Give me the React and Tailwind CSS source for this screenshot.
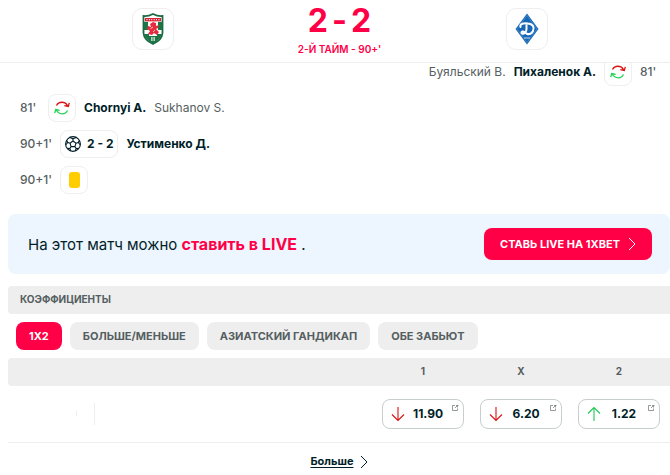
import { useState } from "react";

const tabs = ["1X2", "БОЛЬШЕ/МЕНЬШЕ", "АЗИАТСКИЙ ГАНДИКАП", "ОБЕ ЗАБЬЮТ"];

const odds = [
  { id: "1", value: "11.90", up: false },
  { id: "X", value: "6.20", up: false },
  { id: "2", value: "1.22", up: true },
];

function HomeCrest() {
  return (
    <svg viewBox="0 0 22 32" className="h-8 w-[22px]" aria-hidden="true">
      <path d="M1.5 3 Q6 3.5 11 1 Q16 3.5 20.500 3 V20 Q20 27 11 31 Q2 27 1.500 20Z" fill="#fff" stroke="#1b6a43" strokeWidth="1.8" />
      <path d="M2 9H6V17H2ZM16 9H20V17H16ZM2 21H7V28Q3 25 2 21ZM15 21H20Q19 25 15 28ZM7 23H15V28.500L11 30.500L7 28.500Z" fill="#1b7544" />
      <path d="M3 6.700H19" stroke="#d92235" strokeWidth="3.400" />
      <path d="M4.500 6.700H18" stroke="#fff" strokeWidth="1.200" strokeDasharray=".9 1.500" />
      <path d="M8 11L11 9L14 10L14 13L17 12L16 15L14 16L17 19L15 22L12 20L10 22L6 21L8 18L5 16L6 13L9 14Z" fill="#e52c3e" />
      <path d="M8.500 15.500L11 14M11 19L13 17" stroke="#fff" strokeWidth=".7" />
      <path d="M9 24H13V28H9Z" fill="#b5d3c2" />
      <path d="M10 25H12M10 27H12" stroke="#1b7544" strokeWidth=".7" />
    </svg>
  );
}

function AwayCrest() {
  return (
    <svg viewBox="0 0 24 32" className="h-8 w-6" aria-hidden="true">
      <path d="M12 .5L23.5 16L12 31.5L.5 16Z" fill="#1767b5" />
      <path d="M12 2.5L22 16L12 29.5L2 16Z" fill="none" stroke="#5b98d2" strokeWidth=".6" />
      <path d="M5.500 14C4.500 10.500 9 10 13 10.500C18.500 11 19.500 15 18 18C16.500 21 14 21.500 12 21M11.500 11.500V16C11.500 19 9 21.500 7 20.500C5.500 19 7.500 17.500 10 19.500C11 20.500 12 21 14 21" fill="none" stroke="#fff" strokeWidth="2" strokeLinecap="round" />
      <path d="M9 25H15" stroke="#a6c9e8" strokeWidth="1.2" />
    </svg>
  );
}

function SubstitutionIcon() {
  return (
    <svg viewBox="0 0 16 16" className="size-4" fill="none" strokeWidth="1.3" aria-hidden="true">
      <path d="M2.5 5.5C4.5 1.3 11 .8 13.8 6M15.3 2.8L14.3 6.5L10.3 5.6" stroke="#dc1111" />
      <path d="M13.5 10.5C11.5 14.7 5 15.2 2.2 10M.7 13.2L1.7 9.5L5.7 10.4" stroke="#20d255" />
    </svg>
  );
}

function BallIcon() {
  return (
    <svg viewBox="0 0 16 16" className="size-4" fill="none" stroke="#001e28" strokeWidth="1.1" strokeLinejoin="round" aria-hidden="true">
      <circle cx="8" cy="8" r="7.4" />
      <path d="M8 5L11 7.2L9.9 10.6H6.1L5 7.2ZM8 5V2.8M11 7.2L13.2 6.5M9.9 10.6L11.2 12.5M6.1 10.6L4.8 12.5M5 7.2L2.8 6.5" />
      <path d="M4.8 1.4L8 2.8L11.2 1.4M14.5 4.3L13.2 6.5L15.4 9M13.8 12.4L11.2 12.5L10.2 15M5.8 15L4.8 12.5L2.2 12.4M.6 9L2.8 6.5L1.5 4.3" />
    </svg>
  );
}

function Chevron() {
  return (
    <svg viewBox="0 0 8 14" className="h-3.5 w-2" fill="none" stroke="currentColor" aria-hidden="true">
      <path d="M1 1L7 7L1 13" />
    </svg>
  );
}

function TrendArrow({ up }) {
  return (
    <svg
      viewBox="0 0 14 16"
      className={up ? "h-4 w-3.5 text-[#20c955]" : "h-4 w-3.5 rotate-180 text-[#dc1111]"}
      fill="none"
      stroke="currentColor"
      aria-hidden="true"
    >
      <path d="M7 15V1.5M1 7.5L7 1.5L13 7.5" strokeWidth="1.1" />
    </svg>
  );
}

function ExternalIcon() {
  return (
    <svg viewBox="0 0 8 8" className="absolute top-1 right-1 size-2" fill="none" stroke="#7a8284" aria-hidden="true">
      <path d="M4 1.5H1.5V6.5H6.500V4.5M5 1.5H7.500M6.500 1V3.500M4 4L6.500 1.500" strokeWidth=".8" />
    </svg>
  );
}

function EventRow({ time, icon, score, player, other, away }) {
  return (
    <li className={away ? "flex flex-row-reverse items-center gap-2 pr-2.5" : "flex items-center gap-2 pl-5"}>
      <span className="min-w-5 font-medium text-[#555e61]">{time}</span>
      <span className="flex h-7 min-w-7 items-center justify-center gap-1.5 rounded-lg border border-[#eeeeee] px-1">
        {icon}
        {score && <b className="font-bold">{score}</b>}
      </span>
      {player && <b className="font-bold">{player}</b>}
      {other && <span className="text-[#555e61]">{other}</span>}
    </li>
  );
}

export default function App() {
  const [active, setActive] = useState("1X2");

  return (
    <main className="min-h-screen overflow-hidden bg-white font-['Inter','Liberation_Sans',sans-serif] text-xs text-[#001e28]">
      {/* Score */}
      <header className="relative z-10 grid h-[63px] grid-cols-3 justify-items-center border-b border-[#eeeeee] bg-white pr-[50px] pl-[59px]">
        <div className="mt-2 flex size-[42px] items-center justify-center rounded-[10px] border border-[#eeeeee]">
          <HomeCrest />
        </div>
        <div className="flex flex-col items-center pt-[5px] whitespace-nowrap text-[#ff0046]">
          <div className="flex gap-1 text-[32px] leading-8 font-bold">
            <span>2</span>
            <span>-</span>
            <span>2</span>
          </div>
          <div className="mt-1 text-[10px] leading-4 font-semibold">2-Й ТАЙМ - 90+'</div>
        </div>
        <div className="mt-2 flex size-[42px] items-center justify-center rounded-[10px] border border-[#eeeeee]">
          <AwayCrest />
        </div>
      </header>

      {/* Match events */}
      <ul className="-mt-[5px] flex flex-col gap-2">
        <EventRow time="81'" icon={<SubstitutionIcon />} player="Пихаленок А." other="Буяльский В." away />
        <EventRow time="81'" icon={<SubstitutionIcon />} player="Chornyi A." other="Sukhanov S." />
        <EventRow time="90+1'" icon={<BallIcon />} score="2 - 2" player="Устименко Д." />
        <EventRow time="90+1'" icon={<span className="h-4 w-[11px] rounded-[3px] bg-[#ffcd00]" />} />
      </ul>

      {/* Live betting banner */}
      <section className="mt-5 ml-2 flex h-15 items-center justify-between rounded-lg bg-[#edf5ff] pr-[18px] pl-5 whitespace-nowrap">
        <p className="text-[15px]">
          На этот матч можно <b className="text-base font-bold text-[#ff0046]">ставить в LIVE</b> .
        </p>
        <a href="#live" className="flex h-8 items-center gap-2 rounded-lg bg-[#ff0046] px-4 text-[11px] font-bold text-white">
          СТАВЬ LIVE НА 1XBET
          <Chevron />
        </a>
      </section>

      {/* Odds */}
      <section className="mt-3 ml-2">
        <h2 className="flex h-7 items-center rounded-l bg-[#eeeeee] px-3 text-[10px] font-bold text-[#555e61]">КОЭФФИЦИЕНТЫ</h2>
        <div className="my-2 flex gap-2 px-2 whitespace-nowrap">
          {tabs.map((tab) => (
            <button
              key={tab}
              type="button"
              onClick={() => setActive(tab)}
              className={
                tab === active
                  ? "h-7 rounded-lg bg-[#ff0046] px-[13px] text-[11px] font-bold text-white"
                  : "h-7 rounded-lg bg-[#eeeeee] px-[13px] text-[11px] font-bold text-[#555e61]"
              }
            >
              {tab}
            </button>
          ))}
        </div>
        <table className="w-full table-fixed">
          <thead>
            <tr className="h-7 text-[10px] text-[#555e61]">
              <td className="rounded-l bg-[#eeeeee]"></td>
              {odds.map((odd) => (
                <th key={odd.id} scope="col" className="w-[98px] bg-[#eeeeee] pr-1 font-bold">
                  {odd.id}
                </th>
              ))}
            </tr>
          </thead>
          <tbody>
            <tr className="h-14 border-b border-[#eeeeee]">
              <td>
                <div className="flex items-center gap-[17px] pl-[68px]">
                  <span className="h-[5px] w-px bg-[#eeeeee]" />
                  <span className="h-[22px] w-px bg-[#eeeeee]" />
                </div>
              </td>
              {odds.map((odd) => (
                <td key={odd.id} className="pr-2.5 pl-1.5">
                  <button
                    type="button"
                    className="relative flex h-[30px] w-full items-center rounded-lg border border-[#c8cdcd] pl-2 font-bold"
                  >
                    <TrendArrow up={odd.up} />
                    <span className="flex-1 pr-3 text-center">{odd.value}</span>
                    <ExternalIcon />
                  </button>
                </td>
              ))}
            </tr>
          </tbody>
        </table>
        <div className="flex h-[38px] items-center justify-center">
          <a href="#odds" className="flex items-center gap-1.5 text-[11px] font-bold">
            <span className="underline underline-offset-2">Больше</span>
            <Chevron />
          </a>
        </div>
      </section>
    </main>
  );
}
